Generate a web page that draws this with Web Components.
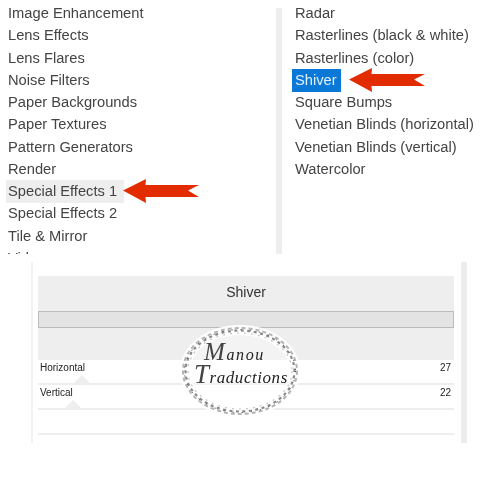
<!DOCTYPE html>
<html>
<head>
<meta charset="utf-8">
<title>Shiver</title>
<style>
  html, body { margin: 0; background: #fff; }
  body { font-family: "Liberation Sans", Arial, sans-serif; color: #333; overflow: hidden; width: 499px; height: 478px; }
</style>
</head>
<body>
<filter-page>
  <filter-list slot="left" style="--list-width: 276px; --pad: 8px" offset="-6">
    <filter-item>Image Enhancement</filter-item>
    <filter-item>Lens Effects</filter-item>
    <filter-item>Lens Flares</filter-item>
    <filter-item>Noise Filters</filter-item>
    <filter-item>Paper Backgrounds</filter-item>
    <filter-item>Paper Textures</filter-item>
    <filter-item>Pattern Generators</filter-item>
    <filter-item>Render</filter-item>
    <filter-item state="hover" arrow>Special Effects 1</filter-item>
    <filter-item>Special Effects 2</filter-item>
    <filter-item>Tile &amp; Mirror</filter-item>
    <filter-item>Video</filter-item>
  </filter-list>
  <filter-list slot="right" style="--list-width: 207px; --pad: 13px" offset="-6" divider>
    <filter-item>Radar</filter-item>
    <filter-item>Rasterlines (black &amp; white)</filter-item>
    <filter-item>Rasterlines (color)</filter-item>
    <filter-item state="selected" arrow>Shiver</filter-item>
    <filter-item>Square Bumps</filter-item>
    <filter-item>Venetian Blinds (horizontal)</filter-item>
    <filter-item>Venetian Blinds (vertical)</filter-item>
    <filter-item>Watercolor</filter-item>
  </filter-list>
  <shiver-dialog slot="dialog" title="Shiver">
    <slider-row label="Horizontal" value="27" thumb="82"></slider-row>
    <slider-row label="Vertical" value="22" thumb="73"></slider-row>
    <slider-row></slider-row>
  </shiver-dialog>
</filter-page>
<script>
  // page: two lists on top, dialog underneath
  class FilterPage extends HTMLElement {
    connectedCallback() {
      this.attachShadow({ mode: 'open' }).innerHTML = `
        <style>
          :host { display: block; position: relative; width: 499px; height: 478px; }
          .lists { display: flex; padding-top: 8px; height: 246px; }
          .gap { height: 8px; }
        </style>
        <div class="lists"><slot name="left"></slot><slot name="right"></slot></div>
        <div class="gap"></div>
        <slot name="dialog"></slot>`;
    }
  }

  class FilterList extends HTMLElement {
    connectedCallback() {
      const offset = this.getAttribute('offset') || 0;
      this.attachShadow({ mode: 'open' }).innerHTML = `
        <style>
          :host { display: block; box-sizing: border-box; width: var(--list-width); height: 246px; overflow: hidden; }
          :host([divider]) { border-left: 6px solid #eeeeee; }
          .inner { margin-top: ${offset}px; display: flex; flex-direction: column; }
        </style>
        <div class="inner"><slot></slot></div>`;
    }
  }

  // arrow points are relative to the row
  const ARROW = `<svg class="arrow" width="78" height="26" viewBox="0 0 78 26">
      <path d="M1 12.5 L24 1 L23.5 7 L77 7 L66 12.5 L77 19 L23.5 19 L24 25 Z" fill="#e32b00"/>
    </svg>`;

  class FilterItem extends HTMLElement {
    connectedCallback() {
      const hasArrow = this.hasAttribute('arrow');
      this.attachShadow({ mode: 'open' }).innerHTML = `
        <style>
          :host { display: block; position: relative; height: 22.27px; line-height: 22.27px; font-size: 14.7px; white-space: nowrap; color: #444; padding-left: var(--pad); }
          span { display: inline-block; position: relative; filter: blur(.3px); }
          :host([state="hover"]) .bg, :host([state="selected"]) .bg { position: absolute; top: 0; bottom: -1px; left: calc(var(--pad) - 2px); }
          :host([state="hover"]) .bg { width: 118px; background: #eeeeee; }
          :host([state="selected"]) .bg { left: calc(var(--pad) - 3px); width: 49px; background: #0a78d7; }
          :host([state="selected"]) { color: #dff0ff; }
          .arrow { position: absolute; top: -2px; }
          :host([state="hover"]) .arrow { left: 122px; }
          :host([state="selected"]) .arrow { left: 66px; top: -2px; }
        </style>
        <div class="bg"></div><span><slot></slot></span>${hasArrow ? ARROW : ''}`;
    }
  }

  class ShiverDialog extends HTMLElement {
    connectedCallback() {
      this.attachShadow({ mode: 'open' }).innerHTML = `
        <style>
          :host { display: block; position: relative; box-sizing: border-box; margin-left: 31px; width: 436px; height: 181px;
                  border-left: 2px solid #f2f2f2; border-right: 6px solid #ececec; padding: 14px 7px 0 5px; }
          .head { height: 84px; background: #eeeeee; display: flex; flex-direction: column; }
          .title { height: 35px; line-height: 33px; text-align: center; font-size: 14px; color: #333; filter: blur(.25px); }
          .bar { box-sizing: border-box; height: 17px; background: #e3e3e3; border: 1px solid #bcbcbc; }
          .seal { position: absolute; left: 145px; top: 62px; }
        </style>
        <div class="head">
          <div class="title">${this.getAttribute('title')}</div>
          <div class="bar"></div>
        </div>
        <slot></slot>
        <svg class="seal" width="124" height="94" viewBox="0 0 124 94">
          <defs><filter id="soft"><feGaussianBlur stdDeviation=".35"/></filter></defs>
          <ellipse cx="62" cy="47" rx="56" ry="42" fill="#fff" fill-opacity=".3"/>
          <ellipse cx="62" cy="47" rx="55" ry="41" fill="none" stroke="#fff" stroke-width="10" stroke-opacity=".92"/>
          <g filter="url(#soft)" fill="none">
            <ellipse cx="62" cy="47" rx="57" ry="43" stroke="#b4b4b4" stroke-width="2" stroke-dasharray="4 3"/>
            <ellipse cx="62" cy="47" rx="54.5" ry="40.5" stroke="#8a8a8a" stroke-width="2.2" stroke-dasharray="3 3.5" stroke-dashoffset="2"/>
            <ellipse cx="62" cy="47" rx="52" ry="38" stroke="#c4c4c4" stroke-width="1.2" stroke-dasharray="2 5"/>
            <ellipse cx="62" cy="47" rx="55.5" ry="41.5" stroke="#444" stroke-width="1" stroke-dasharray="1.2 8"/>
          </g>
          <g filter="url(#soft)" font-family="Liberation Serif, serif" font-style="italic" fill="#222">
            <text x="26" y="36" font-size="16" letter-spacing="1.6"><tspan font-size="25" fill="#444">M</tspan>anou</text>
            <text x="16" y="59" font-size="17" letter-spacing=".55"><tspan font-size="27" fill="#444">T</tspan>raductions</text>
          </g>
        </svg>`;
    }
  }

  class SliderRow extends HTMLElement {
    connectedCallback() {
      const label = this.getAttribute('label') || '';
      const value = this.getAttribute('value') || '';
      const thumb = this.getAttribute('thumb');
      this.attachShadow({ mode: 'open' }).innerHTML = `
        <style>
          :host { display: block; position: relative; box-sizing: border-box; height: 25px; border-bottom: 2px solid #eeeeee; font-size: 10px; color: #222; }
          .row { display: flex; justify-content: space-between; padding: 2px 3px 0 2px; line-height: 12px; filter: blur(.2px); }
          .thumb { position: absolute; bottom: 0; width: 0; height: 0; border-left: 8px solid transparent; border-right: 8px solid transparent; border-bottom: 8px solid #eeeeee; }
        </style>
        <div class="row"><span>${label}</span><span>${value}</span></div>
        ${thumb ? `<div class="thumb" style="left:${thumb - 38 - 8}px"></div>` : ''}`;
    }
  }

  customElements.define('filter-page', FilterPage);
  customElements.define('filter-list', FilterList);
  customElements.define('filter-item', FilterItem);
  customElements.define('shiver-dialog', ShiverDialog);
  customElements.define('slider-row', SliderRow);
</script>
</body>
</html>
